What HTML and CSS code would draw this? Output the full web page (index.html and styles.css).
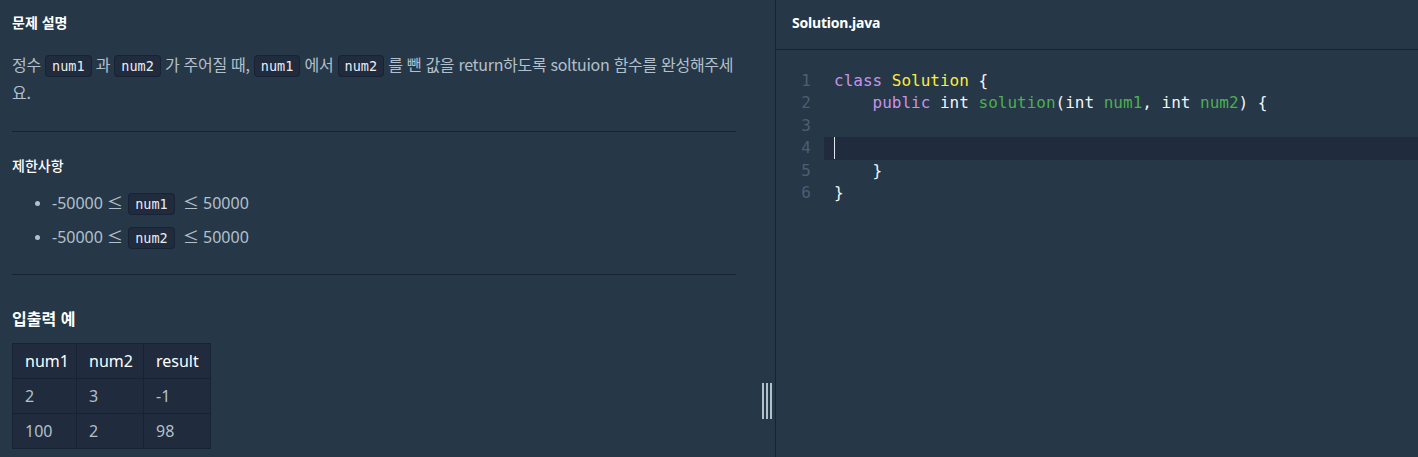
FILE: index.html
```html
<!DOCTYPE html>
<html lang="ko">
<head>
<meta charset="utf-8">
<link rel="stylesheet" href="styles.css">
</head>
<body>
<div class="app">
  <section class="left">
    <div class="guide">
      <h5 class="h-desc">문제 설명</h5>
      <p class="desc">정수 <code>num1</code> 과 <code>num2</code> 가 주어질 때, <code>num1</code> 에서 <code>num2</code> 를 뺀 값을 return하도록 soltuion 함수를 완성해주세요.</p>
      <hr>
      <h5 class="h-limit">제한사항</h5>
      <ul class="limits">
        <li>-50000 ≤ <code>num1</code> ≤ 50000</li>
        <li>-50000 ≤ <code>num2</code> ≤ 50000</li>
      </ul>
      <hr class="hr2">
      <h5 class="h-io">입출력 예</h5>
      <table class="io">
        <colgroup><col class="c1"><col class="c2"><col class="c3"></colgroup>
        <thead><tr><th>num1</th><th>num2</th><th>result</th></tr></thead>
        <tbody>
          <tr><td>2</td><td>3</td><td>-1</td></tr>
          <tr><td>100</td><td>2</td><td>98</td></tr>
        </tbody>
      </table>
    </div>
    <div class="handle"><span></span><span></span><span></span></div>
  </section>
  <section class="right">
    <div class="tab">Solution.java</div>
    <div class="editor">
      <div class="line"><span class="num">1</span><span class="code"><span class="kw">class</span> <span class="cls">Solution</span> {</span></div>
      <div class="line"><span class="num">2</span><span class="code">    <span class="kw">public</span> int <span class="fn">solution</span>(int <span class="var">num1</span>, int <span class="var">num2</span>) {</span></div>
      <div class="line"><span class="num">3</span><span class="code"> </span></div>
      <div class="line active"><span class="num">4</span><span class="code"><span class="cursor"></span></span></div>
      <div class="line"><span class="num">5</span><span class="code">    }</span></div>
      <div class="line"><span class="num">6</span><span class="code">}</span></div>
    </div>
  </section>
</div>
</body>
</html>
```
FILE: styles.css
```css
* { box-sizing: border-box; }
html, body { margin: 0; padding: 0; }
body {
  background: #263747;
  font-family: "Noto Sans", "Noto Sans CJK KR", sans-serif;
  color: #b2c0cc;
  width: 1418px;
  height: 457px;
  overflow: hidden;
}
.app { display: flex; height: 457px; }
.left {
  position: relative;
  width: 776px;
  border-right: 1px solid #172334;
  padding: 0 39px 0 12px;
}
.guide { width: 724px; }
h5 {
  margin: 0;
  color: #ffffff;
  font-family: "Noto Sans CJK KR", sans-serif;
  font-weight: 700;
  font-size: 14px;
  line-height: 20px;
}
.h-desc { padding-top: 12px; }
.desc {
  margin: 18px 0 0;
  font-family: "Noto Sans CJK KR", sans-serif;
  font-size: 16px;
  line-height: 28px;
  letter-spacing: -0.3px;
}
code {
  font-family: "DejaVu Sans Mono", monospace;
  font-size: 13.5px;
  line-height: 14px;
  letter-spacing: 0;
  color: #e9ecf3;
  background: #202b3d;
  border: 1px solid #172334;
  border-radius: 4px;
  padding: 2px 6px;
}
hr {
  border: 0;
  border-top: 1px solid #172334;
  margin: 25px 0 0;
  height: 0;
}
.h-limit { margin-top: 23px; font-weight: 500; }
.limits {
  margin: 11px 0 0;
  padding-left: 40px;
  font-family: "Noto Sans", "Noto Sans CJK KR", sans-serif;
  font-size: 16px;
  line-height: 34px;
}
.limits li { height: 34px; }
.limits li::marker { color: #b2c0cc; font-size: 14px; }
.limits code { margin: 0 4px 0 1px; }
.hr2 { margin-top: 20px; }
.h-io { margin-top: 32px; font-size: 16px; line-height: 22px; }
.io {
  margin-top: 14px;
  border-collapse: collapse;
  table-layout: fixed;
  width: 198px;
  background: #202b3d;
  font-size: 16px;
}
.io .c1 { width: 64px; }
.io .c2 { width: 67px; }
.io .c3 { width: 67px; }
.io th, .io td {
  border: 1px solid #172334;
  height: 35px;
  padding: 0 0 0 12px;
  line-height: 20px;
  text-align: left;
  font-weight: 400;
  white-space: nowrap;
}
.io th { color: #ffffff; }
.io td { color: #b2c0cc; }
.handle {
  position: absolute;
  left: 762px;
  top: 383px;
  display: flex;
  gap: 2px;
}
.handle span { width: 2px; height: 36px; background: #b2c0cc; }
.right { flex: 1; display: flex; flex-direction: column; }
.tab {
  height: 50px;
  border-bottom: 1px solid #172334;
  padding: 13px 0 0 16px;
  color: #ffffff;
  font-family: "Noto Sans", sans-serif;
  font-weight: 700;
  font-size: 14px;
  line-height: 20px;
  letter-spacing: -0.2px;
}
.editor {
  padding-top: 20px;
  font-family: "DejaVu Sans Mono", monospace;
  font-size: 16px;
  line-height: 22.4px;
}
.line { display: flex; height: 22.4px; }
.line.active { background: #202b3d; }
.line.active .num { background: #263747; }
.num {
  width: 48px;
  text-align: right;
  padding-right: 13px;
  color: #4c5f72;
  flex: none;
}
.code { padding-left: 10px; white-space: pre; color: #f2f4f7; flex: 1; }
.kw { color: #c792ea; }
.cls { color: #ffeb3b; }
.fn { color: #4caf50; }
.var { color: #4caf50; }
.cursor {
  display: inline-block;
  width: 1px;
  height: 22px;
  background: #e0e6ec;
  vertical-align: top;
}
```
